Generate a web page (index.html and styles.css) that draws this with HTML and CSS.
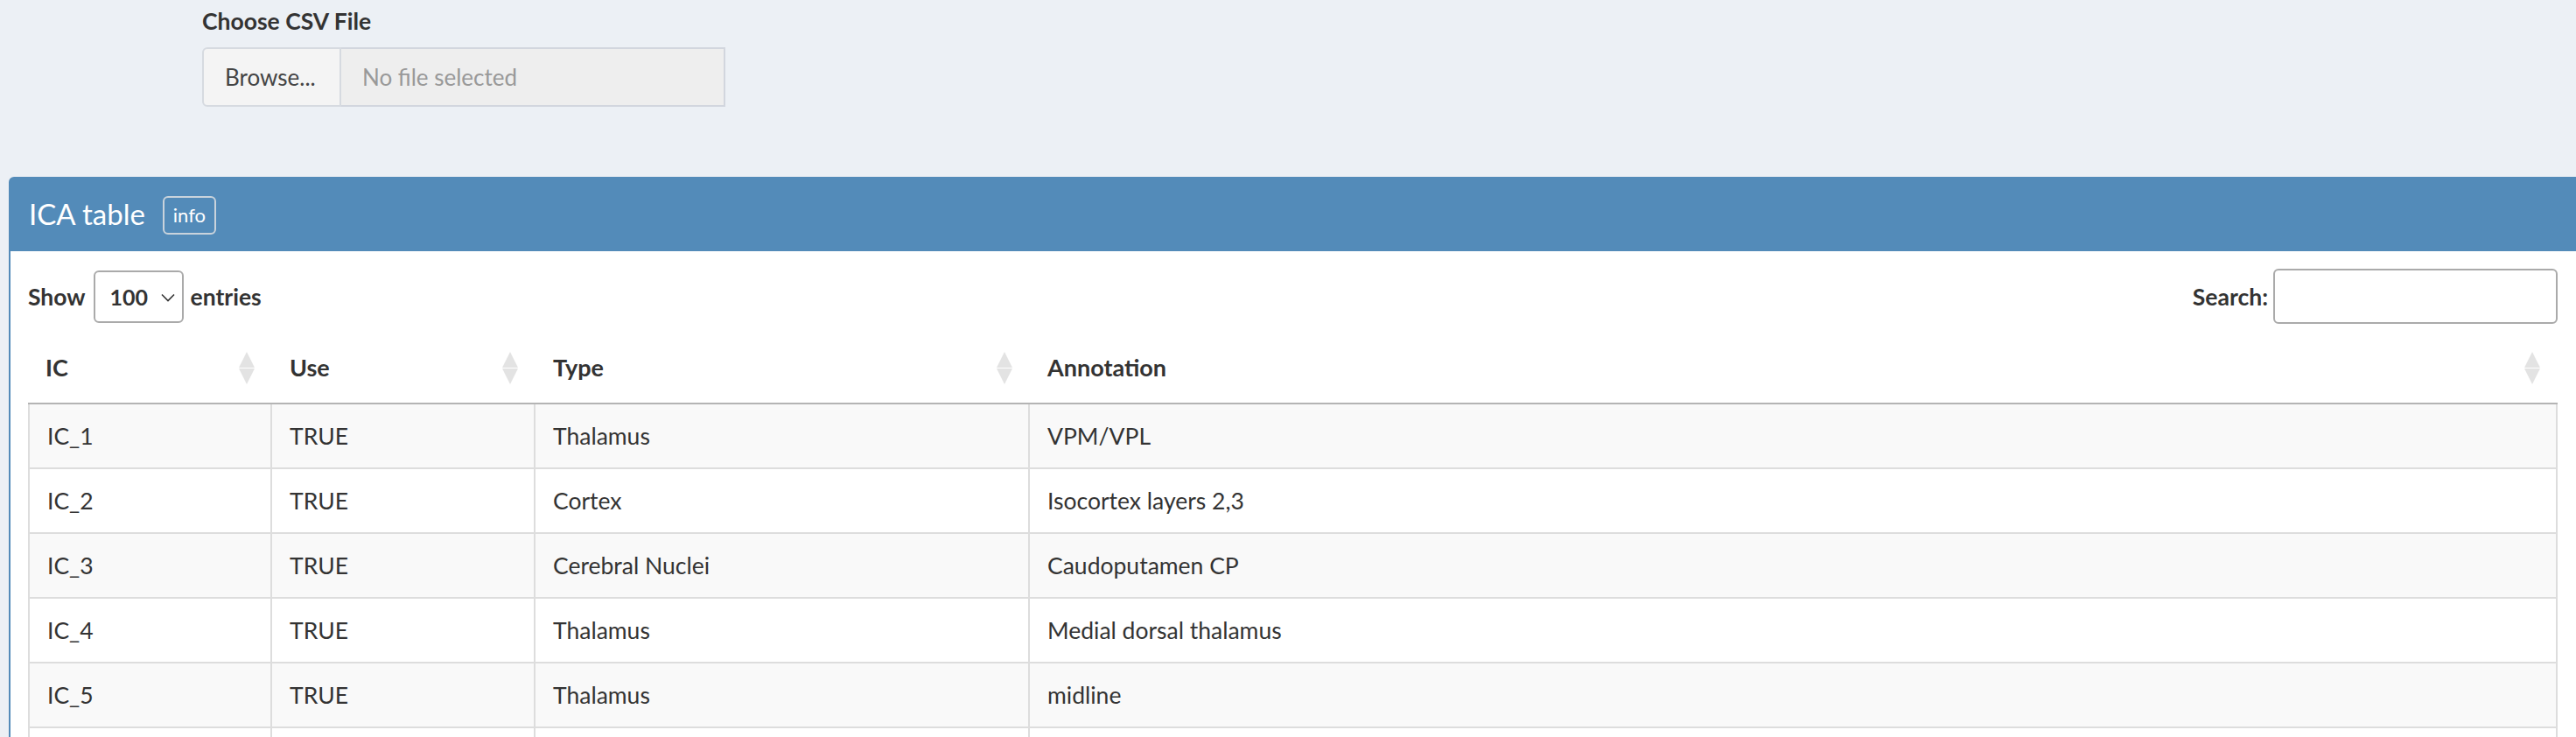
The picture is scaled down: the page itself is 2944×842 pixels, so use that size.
FILE: index.html
```html
<!DOCTYPE html>
<html>
<head>
<meta charset="utf-8">
<title>ICA table</title>
<link rel="stylesheet" href="styles.css">
</head>
<body>
<div class="page">
  <div class="file-group">
    <label class="control-label">Choose CSV File</label>
    <div class="input-group">
      <span class="btn-browse">Browse...</span>
      <span class="file-name">No file selected</span>
    </div>
  </div>

  <div class="box">
    <div class="box-header">
      <h3 class="box-title">ICA table</h3>
      <span class="btn-info">info</span>
    </div>
    <div class="box-body">
      <div class="dt-top">
        <label class="dt-length">Show
          <span class="dt-select">100
            <svg class="chev" width="16" height="10" viewBox="0 0 16 10"><path d="M1 1.5 L8 8.5 L15 1.5" fill="none" stroke="#333" stroke-width="1.6"/></svg>
          </span>
          entries</label>
        <label class="dt-search">Search:<span class="dt-input"></span></label>
      </div>
      <table class="dt">
        <thead>
          <tr>
            <th class="c-ic">IC<span class="sort"><svg width="18" height="37" viewBox="0 0 18 37"><polygon points="9,0 18,18 0,18" fill="#e3e3e3"/><polygon points="0,19 18,19 9,37" fill="#e3e3e3"/></svg></span></th>
            <th class="c-use">Use<span class="sort"><svg width="18" height="37" viewBox="0 0 18 37"><polygon points="9,0 18,18 0,18" fill="#e3e3e3"/><polygon points="0,19 18,19 9,37" fill="#e3e3e3"/></svg></span></th>
            <th class="c-type">Type<span class="sort"><svg width="18" height="37" viewBox="0 0 18 37"><polygon points="9,0 18,18 0,18" fill="#e3e3e3"/><polygon points="0,19 18,19 9,37" fill="#e3e3e3"/></svg></span></th>
            <th class="c-ann">Annotation<span class="sort"><svg width="18" height="37" viewBox="0 0 18 37"><polygon points="9,0 18,18 0,18" fill="#e3e3e3"/><polygon points="0,19 18,19 9,37" fill="#e3e3e3"/></svg></span></th>
          </tr>
        </thead>
        <tbody>
          <tr class="odd"><td>IC_1</td><td>TRUE</td><td>Thalamus</td><td>VPM/VPL</td></tr>
          <tr><td>IC_2</td><td>TRUE</td><td>Cortex</td><td>Isocortex layers 2,3</td></tr>
          <tr class="odd"><td>IC_3</td><td>TRUE</td><td>Cerebral Nuclei</td><td>Caudoputamen CP</td></tr>
          <tr><td>IC_4</td><td>TRUE</td><td>Thalamus</td><td>Medial dorsal thalamus</td></tr>
          <tr class="odd"><td>IC_5</td><td>TRUE</td><td>Thalamus</td><td>midline</td></tr>
          <tr><td>&nbsp;</td><td>&nbsp;</td><td>&nbsp;</td><td>&nbsp;</td></tr>
        </tbody>
      </table>
    </div>
  </div>
</div>
</body>
</html>
```

FILE: styles.css
```css
html, body {
  margin: 0;
  padding: 0;
  overflow: hidden;
}
body {
  background: #ecf0f5;
  font-family: Lato, "Liberation Sans", sans-serif;
  font-size: 26px;
  line-height: 40px;
  color: #333;
  width: 2944px;
  height: 842px;
}
.page {
  padding-top: 4px;
}
.file-group {
  margin-left: 231px;
}
.control-label {
  display: block;
  font-weight: 700;
  font-size: 26.5px;
  margin-bottom: 10px;
}
.input-group {
  display: flex;
  width: 598px;
  height: 68px;
}
.btn-browse {
  display: flex;
  align-items: center;
  box-sizing: border-box;
  width: 159px;
  padding-left: 24px;
  background: #f4f4f4;
  border: 2px solid #d6dae0;
  border-radius: 6px 0 0 6px;
  color: #444;
}
.file-name {
  display: flex;
  align-items: center;
  box-sizing: border-box;
  flex: 1;
  padding-left: 24px;
  background: #eeeeee;
  border: 2px solid #d2d6de;
  border-left: none;
  color: #999;
}
.box {
  margin-top: 80px;
  margin-left: 10px;
  width: 2950px;
  background: #fff;
  border: 2px solid #538bb9;
  border-bottom: none;
  border-radius: 6px 6px 0 0;
  box-sizing: border-box;
}
.box-header {
  display: flex;
  align-items: flex-start;
  gap: 20px;
  background: #538bb9;
  padding: 20px 20px 19px 21px;
  color: #fff;
}
.box-title {
  margin: 0;
  font-size: 33px;
  font-weight: 400;
  line-height: 40px;
}
.btn-info {
  display: inline-flex;
  align-items: center;
  justify-content: center;
  box-sizing: border-box;
  width: 61px;
  height: 44px;
  border: 2px solid #c9d3dc;
  border-radius: 6px;
  font-size: 22px;
  color: #fff;
}
.box-body {
  padding: 20px 20px 0 20px;
}
.dt-top {
  display: flex;
  justify-content: space-between;
  align-items: center;
  width: 2891px;
  height: 63px;
}
.dt-length, .dt-search {
  display: flex;
  align-items: center;
  font-weight: 700;
  font-size: 26.5px;
}
.dt-select {
  display: inline-flex;
  align-items: center;
  box-sizing: border-box;
  width: 103px;
  height: 60px;
  margin: 0 8px 0 9px;
  padding-left: 17px;
  border: 2px solid #aaa;
  border-radius: 6px;
  font-size: 25px;
  font-weight: 700;
  position: relative;
}
.chev {
  position: absolute;
  right: 8px;
  top: 24px;
}
.dt-input {
  display: inline-block;
  box-sizing: border-box;
  width: 325px;
  height: 63px;
  margin-left: 6px;
  border: 2px solid #aaa;
  border-radius: 6px;
  background: #fff;
}
.dt {
  margin-top: 10px;
  width: 2891px;
  border-collapse: separate;
  border-spacing: 0;
  table-layout: fixed;
  font-size: 26.5px;
}
.dt th {
  position: relative;
  box-sizing: border-box;
  text-align: left;
  font-weight: 700;
  font-size: 27px;
  padding: 20px 20px;
  border-bottom: 2px solid #b4b4b4;
}
.c-ic { width: 279px; }
.c-use { width: 301px; }
.c-type { width: 565px; }
.c-ann { width: 1746px; }
.sort {
  position: absolute;
  right: 20px;
  top: 22px;
  width: 18px;
  height: 37px;
}
.sort svg { display: block; }
.dt td {
  padding: 16px 20px;
  border-right: 2px solid #ddd;
  border-bottom: 2px solid #ddd;
  white-space: nowrap;
}
.dt td:first-child {
  border-left: 2px solid #ddd;
}
.dt tr.odd td {
  background: #f9f9f9;
}
```
